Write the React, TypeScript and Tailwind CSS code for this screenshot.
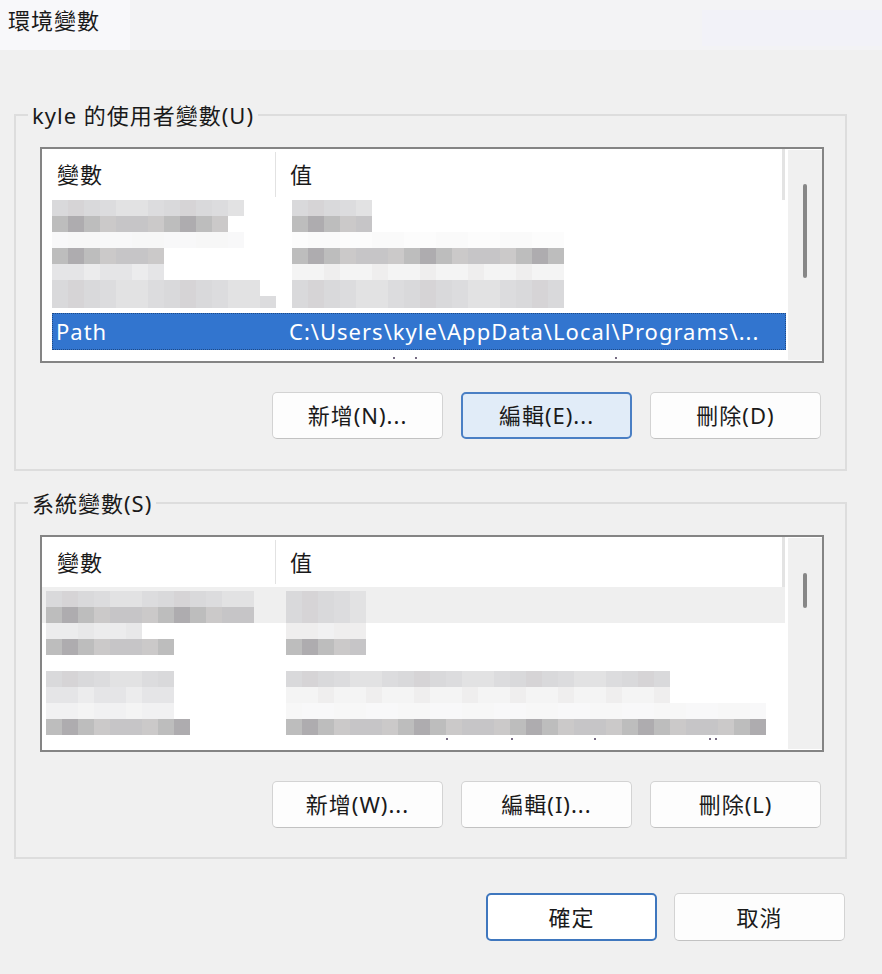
import React from "react";

type Tone = "l" | "m" | "d" | "n";
type MRow = { h: number; c1: number; t1: Tone; c2: number; t2: Tone };

const palette: Record<Tone, string[]> = {
  n: ["bg-[#fafafa]", "bg-[#f8f8f9]", "bg-[#fcfcfc]", "bg-[#f7f7f7]"],
  l: ["bg-[#f1f1f2]", "bg-[#ececed]", "bg-[#f4f4f4]", "bg-[#e8e8e9]", "bg-[#efeeee]", "bg-[#e5e5e7]"],
  m: ["bg-[#d9d9db]", "bg-[#e2e2e3]", "bg-[#d3d2d3]", "bg-[#dcdcde]", "bg-[#cfcfd1]", "bg-[#e6e5e5]", "bg-[#d6d4d6]"],
  d: ["bg-[#bdbdbd]", "bg-[#c6c5c7]", "bg-[#b3b1b4]", "bg-[#cbc9c9]", "bg-[#b8b7ba]", "bg-[#c1bfc3]", "bg-[#aeacaf]"],
};

const font = "font-['Segoe_UI','Noto_Sans','Noto_Sans_CJK_TC',sans-serif]";

function cells(n: number, tone: Tone, seed: number) {
  const list = palette[tone];
  return Array.from({ length: n }, (_, i) => (
    <div key={i} className={`w-[16px] h-full ${list[(seed * 7 + i * 5 + i * i) % list.length]}`} />
  ));
}

function Mosaic({ rows, left }: { rows: MRow[]; left: string }) {
  return (
    <div className={`flex flex-col ${left}`}>
      {rows.map((r, idx) => (
        <div key={idx} className="flex" style={{ height: r.h }}>
          <div className="flex w-[240px] h-full">{cells(r.c1, r.t1, idx + 1)}</div>
          <div className="flex h-full">{cells(r.c2, r.t2, idx + 4)}</div>
        </div>
      ))}
    </div>
  );
}

function Header({ h }: { h: string }) {
  return (
    <div className={`flex ${h} mr-[1px] border-r-[3px] border-[#e3e3e3]`}>
      <div className="w-[233px] pl-[15px] flex items-center text-[#1a1a1a]">變數</div>
      <div className="w-[1px] my-[3px] bg-[#e2e2e2]" />
      <div className="pl-[14px] flex items-center text-[#1a1a1a]">值</div>
    </div>
  );
}

function Scrollbar({ top, h }: { top: string; h: string }) {
  return (
    <div className={`ml-[2px] w-[34px] my-[1px] bg-[#f0f0f0] flex flex-col items-center ${top}`}>
      <div className={`w-[4px] ${h} rounded-full bg-[#878787]`} />
    </div>
  );
}

function Btn({ label, primary, h = "h-[47px]" }: { label: string; primary?: "sel" | "ok"; h?: string }) {
  const cls =
    primary === "sel"
      ? "border-2 border-[#4a7fc4] bg-[#e1ecf8]"
      : primary === "ok"
      ? "border-2 border-[#3f77be] bg-white"
      : "border border-[#d3d3d3] border-b-[#c2c2c2] bg-[#fdfdfd]";
  return (
    <div className={`w-[171px] ${h} rounded-[5px] flex items-center justify-center text-[#1a1a1a] ${cls}`}>
      {label}
    </div>
  );
}

function Group({ legend, children }: { legend: string; children: React.ReactNode }) {
  return (
    <fieldset className="border-2 border-[#dddddd] p-0 m-0">
      <legend className="ml-[12px] px-[4px] leading-[28px] text-[#1a1a1a]">{legend}</legend>
      {children}
    </fieldset>
  );
}

const userRows: MRow[] = [
  { h: 16, c1: 12, t1: "m", c2: 5, t2: "m" },
  { h: 16, c1: 11, t1: "d", c2: 5, t2: "d" },
  { h: 16, c1: 12, t1: "n", c2: 17, t2: "n" },
  { h: 16, c1: 7, t1: "d", c2: 17, t2: "d" },
  { h: 16, c1: 7, t1: "l", c2: 17, t2: "l" },
  { h: 16, c1: 13, t1: "m", c2: 17, t2: "m" },
  { h: 12, c1: 14, t1: "m", c2: 17, t2: "m" },
];

const sysRowsA: MRow[] = [
  { h: 16, c1: 13, t1: "m", c2: 5, t2: "m" },
  { h: 16, c1: 13, t1: "d", c2: 5, t2: "m" },
];
const sysRowsB: MRow[] = [
  { h: 16, c1: 6, t1: "l", c2: 5, t2: "l" },
  { h: 16, c1: 8, t1: "d", c2: 5, t2: "d" },
  { h: 16, c1: 0, t1: "n", c2: 0, t2: "n" },
  { h: 16, c1: 8, t1: "m", c2: 24, t2: "m" },
  { h: 16, c1: 8, t1: "l", c2: 24, t2: "l" },
  { h: 16, c1: 8, t1: "l", c2: 30, t2: "n" },
  { h: 16, c1: 9, t1: "d", c2: 30, t2: "d" },
];

function Dot({ ml }: { ml: string }) {
  return <div className={`w-[2px] h-[2px] rounded-full bg-[#4a3b5a] ${ml}`} />;
}

export default function App() {
  return (
    <div className={`min-h-screen w-[882px] bg-[#f0f0f0] text-[22px] tracking-[1px] ${font}`}>
      {/* Title bar */}
      <div className="h-[50px] bg-[#f3f3f5] flex">
        <div className="w-[130px] bg-[#f8f8fa] pl-[8px] pt-[6px] leading-[28px] text-[#1a1a1a]">環境變數</div>
        <div className="flex-1" />
        <div className="w-[180px] mt-[10px] mb-[4px] bg-[#f2f2f8]" />
      </div>

      <div className="pl-[14px] pr-[35px] pt-[51px]">
        {/* User variables */}
        <Group legend="kyle 的使用者變數(U)">
          <div className="pl-[24px] pr-[21px] pt-[18px] pb-[30px]">
            <div className="h-[216px] border-2 border-[#848484] bg-white flex">
              <div className="flex-1 flex flex-col">
                <Header h="h-[51px]" />
                <Mosaic rows={userRows} left="pl-[10px]" />
                <div className="ml-[10px] mt-[5px] h-[37px] bg-[#3275cf] border border-dotted border-[#1f4a85] flex items-center text-white">
                  <div className="w-[236px] pl-[3px]">Path</div>
                  <div>C:\Users\kyle\AppData\Local\Programs\...</div>
                </div>
                <div className="flex pt-[7px]">
                  <Dot ml="ml-[351px]" />
                  <Dot ml="ml-[20px]" />
                  <Dot ml="ml-[198px]" />
                </div>
              </div>
              <Scrollbar top="pt-[34px]" h="h-[94px]" />
            </div>
            <div className="flex justify-end gap-[18px] mt-[29px] mr-[3px]">
              <Btn label="新增(N)..." />
              <Btn label="編輯(E)..." primary="sel" />
              <Btn label="刪除(D)" />
            </div>
          </div>
        </Group>

        {/* System variables */}
        <div className="mt-[18px]">
          <Group legend="系統變數(S)">
            <div className="pl-[24px] pr-[21px] pt-[18px] pb-[29px]">
              <div className="h-[217px] border-2 border-[#848484] bg-white flex">
                <div className="flex-1 flex flex-col">
                  <Header h="h-[50px]" />
                  <div className="bg-[#efefef] pt-[4px] mr-[1px]">
                    <Mosaic rows={sysRowsA} left="pl-[4px]" />
                  </div>
                  <Mosaic rows={sysRowsB} left="pl-[4px]" />
                  <div className="flex pt-[3px]">
                    <Dot ml="ml-[404px]" />
                    <Dot ml="ml-[63px]" />
                    <Dot ml="ml-[81px]" />
                    <Dot ml="ml-[113px]" />
                    <Dot ml="ml-[4px]" />
                  </div>
                </div>
                <Scrollbar top="pt-[35px]" h="h-[35px]" />
              </div>
              <div className="flex justify-end gap-[18px] mt-[29px] mr-[3px]">
                <Btn label="新增(W)..." />
                <Btn label="編輯(I)..." />
                <Btn label="刪除(L)" />
              </div>
            </div>
          </Group>
        </div>

        {/* Dialog buttons */}
        <div className="flex justify-end gap-[17px] mt-[34px] mr-[2px]">
          <Btn label="確定" primary="ok" h="h-[48px]" />
          <Btn label="取消" h="h-[48px]" />
        </div>
      </div>
    </div>
  );
}
